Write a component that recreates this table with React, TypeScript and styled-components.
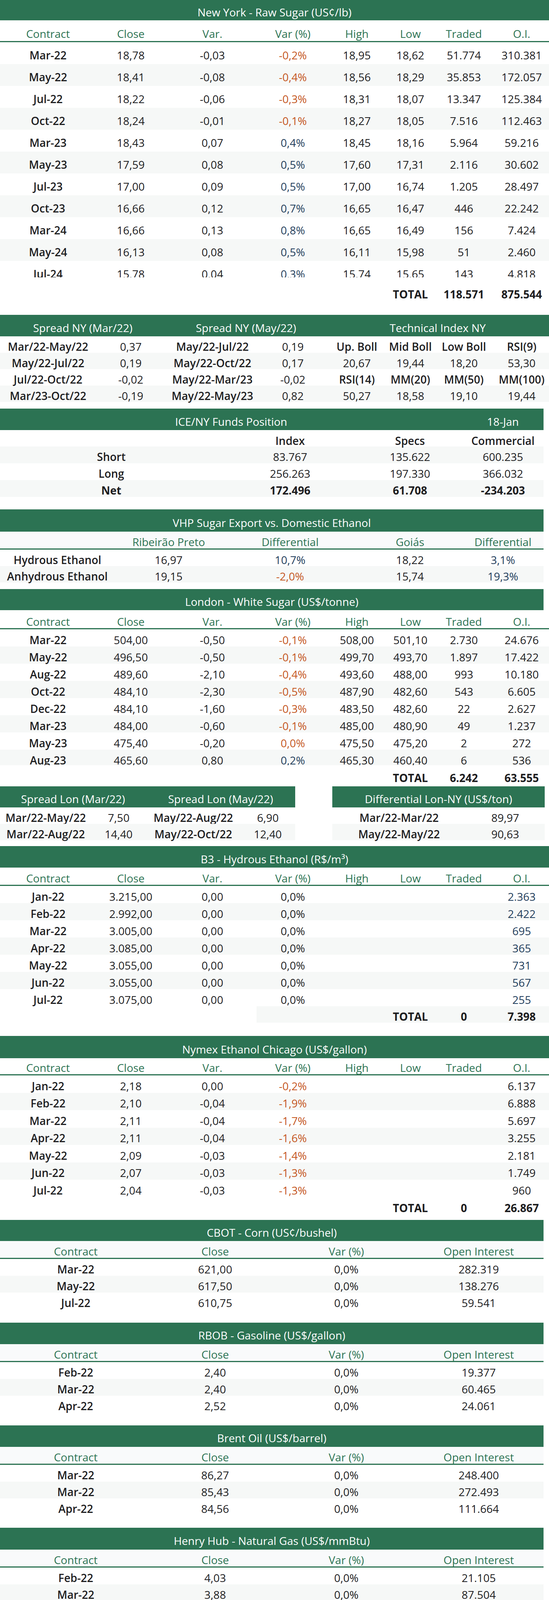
import React from 'react'
import styled, { createGlobalStyle } from 'styled-components'

const GREEN = '#2c7353'
const INK = '#1d1d1f'
const NEG = '#c4561e'
const POS = '#1f3d5b'
const STRIPE = '#f6f8f7'
const HEAD_BG = '#f9fafb'

const C8 = '246px 178px 240px 172px 156px 118px 156px 140px'
const C5 = '294px 276px 346px 268px 208px'
const C4 = '388px 326px 346px 332px'
const ICE = '570px 346px 268px 208px'
const ANP = '388px 340px 338px 340px'
const LEFT = '354px 174px 176px'
const RIGHT = '352px 170px 150px'
const USA = '522px 150px'
const LON_L = '234px 140px 242px 140px'
const LON_R = '342px 202px'

type Tone = 'plain' | 'neg' | 'pos'
type Parsed = { text: string; bold: boolean; label: boolean; tone: Tone }

// cell prefixes: * bold, # label weight, ~ negative (orange), ^ positive (navy)
const parse = (raw: string): Parsed => {
  const out: Parsed = { text: raw, bold: false, label: false, tone: 'plain' }
  let i = 0
  while (i < raw.length && '*#~^'.includes(raw[i])) {
    const ch = raw[i]
    if (ch === '*') out.bold = true
    else if (ch === '#') out.label = true
    else if (ch === '~') out.tone = 'neg'
    else out.tone = 'pos'
    i++
  }
  out.text = raw.slice(i)
  return out
}

const GlobalStyle = createGlobalStyle`
  *, *::before, *::after { box-sizing: border-box; }
  body {
    margin: 0;
    background: #fff;
    color: ${INK};
    font-family: 'Open Sans', 'Liberation Sans', Arial, sans-serif;
    font-size: 28px;
  }
`

const Page = styled.div`
  width: 1406px;
  display: flex;
  flex-direction: column;
`

const Section = styled.section<{ $w?: number; $gap?: number }>`
  width: ${p => p.$w ?? 1406}px;
  margin-bottom: ${p => p.$gap ?? 0}px;
`

const Banner = styled.div<{ $h: number; $cols?: string; $w?: number }>`
  display: grid;
  grid-template-columns: ${p => p.$cols ?? '1fr'};
  align-items: center;
  justify-items: center;
  width: ${p => (p.$w ? `${p.$w}px` : '100%')};
  height: ${p => p.$h}px;
  padding-top: 10px;
  background: ${GREEN};
  color: #fff;
  font-weight: 500;
  line-height: 30px;
  white-space: nowrap;
`

const Row = styled.div<{
  $cols: string
  $h: number
  $shade?: boolean
  $pt?: number
  $top?: boolean
  $mt?: number
  $shadeFrom?: number
  $clip?: boolean
}>`
  display: grid;
  grid-template-columns: ${p => p.$cols};
  height: ${p => p.$h}px;
  margin-top: ${p => p.$mt ?? 0}px;
  padding-top: ${p => p.$pt ?? 9}px;
  align-items: ${p => (p.$top ? 'start' : 'center')};
  background: ${p =>
    p.$shadeFrom !== undefined
      ? `linear-gradient(90deg, #fff ${p.$shadeFrom}px, ${STRIPE} ${p.$shadeFrom}px)`
      : p.$shade
        ? STRIPE
        : '#fff'};
  line-height: 30px;
  overflow: ${p => (p.$clip ? 'hidden' : 'visible')};
`

const Cell = styled.div<{ $tone: Tone; $bold?: boolean; $label?: boolean }>`
  display: flex;
  justify-content: center;
  white-space: nowrap;
  font-weight: ${p => (p.$bold ? 700 : p.$label ? 600 : 400)};
  color: ${p => (p.$tone === 'neg' ? NEG : p.$tone === 'pos' ? POS : INK)};
`

const HeadRow = styled.div<{ $cols: string; $h: number; $light?: boolean; $line?: boolean; $pb?: number }>`
  display: grid;
  grid-template-columns: ${p => p.$cols};
  height: ${p => p.$h}px;
  align-items: end;
  padding-bottom: ${p => p.$pb ?? 2}px;
  background: ${p => (p.$light ? HEAD_BG : '#fff')};
  border-bottom: ${p => (p.$line ? `3px solid ${GREEN}` : 'none')};
  line-height: 30px;
`

const HeadCell = styled.div<{ $ink?: boolean }>`
  display: flex;
  justify-content: center;
  white-space: nowrap;
  color: ${p => (p.$ink ? INK : GREEN)};
  font-weight: ${p => (p.$ink ? 600 : 400)};
`

const Clip = styled.div<{ $h: number }>`
  height: ${p => p.$h}px;
  overflow: hidden;
`

const Split = styled.div<{ $cols: string; $gap: number; $mb: number }>`
  display: grid;
  grid-template-columns: ${p => p.$cols};
  column-gap: ${p => p.$gap}px;
  align-items: start;
  margin-bottom: ${p => p.$mb}px;
`

const Panel = styled.div`
  display: flex;
  flex-direction: column;
`

const Spacer = styled.div<{ $h: number }>`
  height: ${p => p.$h}px;
`

type LineProps = {
  cells: string[]
  cols: string
  h: number
  shade?: boolean
  pt?: number
  top?: boolean
  mt?: number
  shadeFrom?: number
  plainFirst?: boolean
  clip?: boolean
}

const Line = ({ cells, cols, h, shade, pt, top, mt, shadeFrom, plainFirst, clip }: LineProps) => (
  <Row $cols={cols} $h={h} $shade={shade} $pt={pt} $top={top} $mt={mt} $shadeFrom={shadeFrom} $clip={clip}>
    {cells.map((raw, i) => {
      const c = parse(raw)
      return (
        <Cell key={i} $tone={c.tone} $bold={c.bold} $label={c.label || (i === 0 && !plainFirst)}>
          {c.text}
        </Cell>
      )
    })}
  </Row>
)

const Rows = ({ rows, cols, h, offset = 0, plainFirst }: {
  rows: string[][]
  cols: string
  h: number
  offset?: number
  plainFirst?: boolean
}) => (
  <>
    {rows.map((r, i) => (
      <Line key={i} cells={r} cols={cols} h={h} shade={(i + offset) % 2 === 1} plainFirst={plainFirst} />
    ))}
  </>
)

const Head = ({ cells, cols, h, light, line, ink, pb }: {
  cells: string[]
  cols: string
  h: number
  light?: boolean
  line?: boolean
  ink?: boolean
  pb?: number
}) => (
  <HeadRow $cols={cols} $h={h} $light={light} $line={line} $pb={pb}>
    {cells.map((t, i) => (
      <HeadCell key={i} $ink={ink}>{t}</HeadCell>
    ))}
  </HeadRow>
)

const HEAD8 = ['Contract', 'Close', 'Var.', 'Var (%)', 'High', 'Low', 'Traded', 'O.I.']
const HEAD4 = ['Contract', 'Close', 'Var (%)', 'Open Interest']

const nyRows = [
  ['Mar-22', '18,78', '-0,03', '~-0,2%', '18,95', '18,62', '51.774', '310.381'],
  ['May-22', '18,41', '-0,08', '~-0,4%', '18,56', '18,29', '35.853', '172.057'],
  ['Jul-22', '18,22', '-0,06', '~-0,3%', '18,31', '18,07', '13.347', '125.384'],
  ['Oct-22', '18,24', '-0,01', '~-0,1%', '18,27', '18,05', '7.516', '112.463'],
  ['Mar-23', '18,43', '0,07', '^0,4%', '18,45', '18,16', '5.964', '59.216'],
  ['May-23', '17,59', '0,08', '^0,5%', '17,60', '17,31', '2.116', '30.602'],
  ['Jul-23', '17,00', '0,09', '^0,5%', '17,00', '16,74', '1.205', '28.497'],
  ['Oct-23', '16,66', '0,12', '^0,7%', '16,65', '16,47', '446', '22.242'],
  ['Mar-24', '16,66', '0,13', '^0,8%', '16,65', '16,49', '156', '7.424'],
  ['May-24', '16,13', '0,08', '^0,5%', '16,11', '15,98', '51', '2.460'],
  ['Jul-24', '15,78', '0,04', '^0,3%', '15,74', '15,65', '143', '4.818'],
]

const spreadNy = [
  ['Mar/22-May/22', '0,37', '#May/22-Jul/22', '0,19', '#Up. Boll', '#Mid Boll', '#Low Boll', '#RSI(9)'],
  ['May/22-Jul/22', '0,19', '#May/22-Oct/22', '0,17', '20,67', '19,44', '18,20', '53,30'],
  ['Jul/22-Oct/22', '-0,02', '#May/22-Mar/23', '-0,02', '#RSI(14)', '#MM(20)', '#MM(50)', '#MM(100)'],
  ['Mar/23-Oct/22', '-0,19', '#May/22-May/23', '0,82', '50,27', '18,58', '19,10', '19,44'],
]

const iceRows = [
  ['Short', '83.767', '135.622', '600.235'],
  ['Long', '256.263', '197.330', '366.032'],
  ['*Net', '*172.496', '*61.708', '*-234.203'],
]

const vhpRows = [
  ['Hydrous Ethanol', '16,97', '^10,7%', '18,22', '^3,1%'],
  ['Anhydrous Ethanol', '19,15', '~-2,0%', '15,74', '^19,3%'],
]

const londonRows = [
  ['Mar-22', '504,00', '-0,50', '~-0,1%', '508,00', '501,10', '2.730', '24.676'],
  ['May-22', '496,50', '-0,50', '~-0,1%', '499,70', '493,70', '1.897', '17.422'],
  ['Aug-22', '489,60', '-2,10', '~-0,4%', '493,60', '488,00', '993', '10.180'],
  ['Oct-22', '484,10', '-2,30', '~-0,5%', '487,90', '482,60', '543', '6.605'],
  ['Dec-22', '484,10', '-1,60', '~-0,3%', '483,50', '482,60', '22', '2.627'],
  ['Mar-23', '484,00', '-0,60', '~-0,1%', '485,00', '480,90', '49', '1.237'],
  ['May-23', '475,40', '-0,20', '~0,0%', '475,50', '475,20', '2', '272'],
  ['Aug-23', '465,60', '0,80', '^0,2%', '465,30', '460,40', '6', '536'],
]

const spreadLon = [
  ['Mar/22-May/22', '7,50', '#May/22-Aug/22', '6,90'],
  ['Mar/22-Aug/22', '14,40', '#May/22-Oct/22', '12,40'],
]

const diffLon = [
  ['Mar/22-Mar/22', '89,97'],
  ['May/22-May/22', '90,63'],
]

const b3Rows = [
  ['Jan-22', '3.215,00', '0,00', '0,0%', '', '', '', '^2.363'],
  ['Feb-22', '2.992,00', '0,00', '0,0%', '', '', '', '^2.422'],
  ['Mar-22', '3.005,00', '0,00', '0,0%', '', '', '', '^695'],
  ['Apr-22', '3.085,00', '0,00', '0,0%', '', '', '', '^365'],
  ['May-22', '3.055,00', '0,00', '0,0%', '', '', '', '^731'],
  ['Jun-22', '3.055,00', '0,00', '0,0%', '', '', '', '^567'],
  ['Jul-22', '3.075,00', '0,00', '0,0%', '', '', '', '^255'],
]

const nymexRows = [
  ['Jan-22', '2,18', '0,00', '~-0,2%', '', '', '', '6.137'],
  ['Feb-22', '2,10', '-0,04', '~-1,9%', '', '', '', '6.888'],
  ['Mar-22', '2,11', '-0,04', '~-1,7%', '', '', '', '5.697'],
  ['Apr-22', '2,11', '-0,04', '~-1,6%', '', '', '', '3.255'],
  ['May-22', '2,09', '-0,03', '~-1,4%', '', '', '', '2.181'],
  ['Jun-22', '2,07', '-0,03', '~-1,3%', '', '', '', '1.749'],
  ['Jul-22', '2,04', '-0,03', '~-1,3%', '', '', '', '960'],
]

const quads = [
  {
    title: 'CBOT - Corn (US¢/bushel)',
    banner: 54,
    gap: 34,
    rows: [
      ['Mar-22', '621,00', '0,0%', '282.319'],
      ['May-22', '617,50', '0,0%', '138.276'],
      ['Jul-22', '610,75', '0,0%', '59.541'],
    ],
  },
  {
    title: 'RBOB - Gasoline (US$/gallon)',
    banner: 55,
    gap: 33,
    rows: [
      ['Feb-22', '2,40', '0,0%', '19.377'],
      ['Mar-22', '2,40', '0,0%', '60.465'],
      ['Apr-22', '2,52', '0,0%', '24.061'],
    ],
  },
  {
    title: 'Brent Oil (US$/barrel)',
    banner: 55,
    gap: 32,
    rows: [
      ['Mar-22', '86,27', '0,0%', '248.400'],
      ['Mar-22', '85,43', '0,0%', '272.493'],
      ['Apr-22', '84,56', '0,0%', '111.664'],
    ],
  },
  {
    title: 'Henry Hub - Natural Gas (US$/mmBtu)',
    banner: 56,
    gap: 15,
    rows: [
      ['Feb-22', '4,03', '0,0%', '21.105'],
      ['Mar-22', '3,88', '0,0%', '87.504'],
      ['Apr-22', '3,84', '0,0%', '42.401'],
    ],
  },
]

const sugarSp = [
  ['White (50 kg bag)', '148,34', '*~-2,2%'],
  ['Packed white (5 kg bag)', '16,99', '0,0%'],
  ['Refined amorf (1 kg bag)', '3,82', '*0,0%'],
]
const ethanolSp = [
  ['Hydrous Paulinia - Daily', '3,23', '*~-0,7%'],
  ['Hydrous SP - Weekly', '3,30', '~-1,4%'],
  ['Anhydrous SP - Weekly', '3,83', '*~0,0%'],
]
const ethanolCs = [
  ['Hydrous Goiás', '3,26', '*~-0,4%'],
  ['Anhydrous Goiás', '2,88', '~-2,2%'],
  ['Hydrous Mato Grosso', '4,060', '-1,4%'],
  ['Anhydrous Mato Grosso', '-', '-'],
]
const ethanolNe = [
  ['Hydrous Pernambuco', '3,03', '*^0,7%'],
  ['Anhydrous Pernambuco', '-', '-'],
]
const consecana = [
  ['ATR Price (R$/kg)', '1,37', '1,04'],
  ['Accumulated ATR (R$/kg)', '1,17', '0,97'],
  ['Cane/Field (R$/ton)', '127,65', '108,43'],
]

const exMill = [
  ['', '#Hydrous', '#Anhydrous'],
  ['Ribeirão Preto', '3,80', '3,95'],
  ['Paulínia', '3,85', '4,00'],
  ['Araçatuba', '3,78', '3,93'],
  ['Catanduva', '3,79', '3,94'],
]
const premium = [
  ['', '*25-Jan', '*20-Jan'],
  ['VHP vs NY H2 (US¢/lb)', '0,00', '-0,01'],
  ['150 vs NY H2 (US$/ton)', '0,00', '72,50'],
]
const domestic = [
  ['', '*21-Jan', ''],
  ['Goiás', '131,20', ''],
  ['Pernambuco', '137,65', ''],
  ['Alagoas', '134,16', ''],
]
const usaDiff = [
  ['CBOT Ethanol - B3 Ethanol', '~-0,06'],
  ['RBOB Gasoline - CBOT Ethanol', '0,22'],
  ['CBOT Ethanol - CBOT Corn', '~-0,08'],
  ['Weekly ethanol plant margin', '^18,6%'],
]

const anpRows = [
  ['São Paulo', '6,07', '6,34', '~95,8%'],
  ['Minas Gerais', '5,23', '6,94', '~75,4%'],
  ['Paraná', '5,02', '6,34', '~79,3%'],
  ['Goiás', '5,77', '6,92', '~83,3%'],
  ['Mato Grosso do Sul', '4,67', '6,49', '~71,9%'],
  ['Mato Grosso', '5,73', '6,53', '~87,8%'],
  ['Rio Grande do Sul', '5,68', '6,51', '~87,2%'],
  ['Pernambuco', '5,11', '6,59', '~77,6%'],
  ['Alagoas', '5,12', '6,52', '~78,4%'],
  ['Paraíba', '6,16', '6,49', '~95,0%'],
  ['Bahia', '5,32', '6,79', '~78,3%'],
]

const carbonRows = [
  ['*01/03/22', '168,70', '1.297.757', '0,36', '521,28'],
  ['*01/10/22', '169,64', '739.527', '0,37', '524,18'],
  ['*01/17/22', '172,03', '116.000', '0,37', '531,57'],
]

const App = () => {
  return (
    <Page>
      <GlobalStyle />

      <Section $gap={30}>
        <Banner $h={52}>New York - Raw Sugar (US¢/lb)</Banner>
        <Head cells={HEAD8} cols={C8} h={56} line pb={4} />
        <Clip $h={602}>
          <Rows rows={nyRows} cols={C8} h={56} />
        </Clip>
        <Line cells={['', '', '', '', '', '*TOTAL', '*118.571', '*875.544']} cols={C8} h={56} mt={10} />
      </Section>

      <Section $gap={17}>
        <Banner $h={55} $cols="424px 412px 570px">
          <span>Spread NY (Mar/22)</span>
          <span>Spread NY (May/22)</span>
          <span>Technical Index NY</span>
        </Banner>
        <Rows rows={spreadNy} cols={C8} h={42} />
      </Section>

      <Section $w={1392} $gap={32}>
        <Banner $h={55} $cols="1184px 208px">
          <span>ICE/NY Funds Position</span>
          <span>18-Jan</span>
        </Banner>
        <Head cells={['', 'Index', 'Specs', 'Commercial']} cols={ICE} h={42} ink pb={0} />
        <Rows rows={iceRows} cols={ICE} h={43} offset={1} />
      </Section>

      <Section $w={1392} $gap={17}>
        <Banner $h={57}>VHP Sugar Export vs. Domestic Ethanol</Banner>
        <Head cells={['', 'Ribeirão Preto', 'Differential', 'Goiás', 'Differential']} cols={C5} h={46} light line />
        <Rows rows={vhpRows} cols={C5} h={42} />
      </Section>

      <Section $gap={5}>
        <Banner $h={54} $w={1392}>London - White Sugar (US$/tonne)</Banner>
        <Head cells={HEAD8} cols={C8} h={49} line />
        <Clip $h={348}>
          <Rows rows={londonRows} cols={C8} h={44} />
        </Clip>
        <Line cells={['', '', '', '', '', '*TOTAL', '*6.242', '*63.555']} cols={C8} h={44} mt={5} />
      </Section>

      <Split $cols="756px 544px" $gap={95} $mb={15}>
        <Panel>
          <Banner $h={54} $cols="374px 382px">
            <span>Spread Lon (Mar/22)</span>
            <span>Spread Lon (May/22)</span>
          </Banner>
          <Rows rows={spreadLon} cols={LON_L} h={42} />
        </Panel>
        <Panel>
          <Banner $h={54}>Differential Lon-NY (US$/ton)</Banner>
          <Rows rows={diffLon} cols={LON_R} h={42} />
        </Panel>
      </Split>

      <Section $gap={34}>
        <Banner $h={55}>B3 - Hydrous Ethanol (R$/m³)</Banner>
        <Head cells={HEAD8} cols={C8} h={47} line />
        <Rows rows={b3Rows} cols={C8} h={44} />
        <Line cells={['', '', '', '', '', '*TOTAL', '*0', '*7.398']} cols={C8} h={42} shadeFrom={657} />
      </Section>

      <Section $gap={12}>
        <Banner $h={57}>Nymex Ethanol Chicago (US$/gallon)</Banner>
        <Head cells={HEAD8} cols={C8} h={44} line />
        <Rows rows={nymexRows} cols={C8} h={44.5} />
        <Line cells={['', '', '', '', '', '*TOTAL', '*0', '*26.867']} cols={C8} h={46} />
      </Section>

      {quads.map(q => (
        <Section key={q.title} $w={1392} $gap={q.gap}>
          <Banner $h={q.banner}>{q.title}</Banner>
          <Head cells={HEAD4} cols={C4} h={46} light line />
          <Rows rows={q.rows} cols={C4} h={43} />
        </Section>
      ))}

      <Split $cols="704px 672px" $gap={16} $mb={11}>
        <Panel>
          <Banner $h={54}>CEPEA/ESALQ Indicators</Banner>
          <Head cells={['Sugar - São Paulo', 'R$', 'Variation']} cols={LEFT} h={47} light line />
          <Rows rows={sugarSp} cols={LEFT} h={43.5} />
          <Head cells={['Ethanol São Paulo', 'R$/L', 'Variation']} cols={LEFT} h={47} light line />
          <Rows rows={ethanolSp} cols={LEFT} h={43.5} />
          <Head cells={['Ethanol - Center-South', 'R$/L', 'Variation']} cols={LEFT} h={47} light line />
          <Rows rows={ethanolCs} cols={LEFT} h={43.5} />
          <Head cells={['Ethanol - Northeast', 'R$/L', 'Variation']} cols={LEFT} h={47} light line />
          <Rows rows={ethanolNe} cols={LEFT} h={43.5} />
          <Line cells={['Hydrous Alagoas', '3,13', '*^0,7%']} cols={LEFT} h={35} pt={6} top clip />
          <Line cells={['Anhydrous Alagoas', '3,83', '^1,0%']} cols={LEFT} h={55} pt={14} shade />
          <Banner $h={43}>CONSECANA Indicators</Banner>
          <Head cells={['', 'SP (Nov/21)', 'PR (Nov/21)']} cols={LEFT} h={47} light line />
          <Rows rows={consecana} cols={LEFT} h={43.5} />
        </Panel>
        <Panel>
          <Banner $h={54}>StoneX Indicators</Banner>
          <Head cells={['Ex-mill Ethanol Prices: São Paulo (R$/L)']} cols="1fr" h={47} light line />
          <Rows rows={exMill} cols={RIGHT} h={43.5} />
          <Head cells={['Sugar Premium: FOB Santos-SP']} cols="1fr" h={47} light line />
          <Rows rows={premium} cols={RIGHT} h={43.5} />
          <Spacer $h={43.5} />
          <Head cells={['Domestic Sugar Prices (R$/50kg bag)']} cols="1fr" h={47} line />
          <Rows rows={domestic} cols={RIGHT} h={43.5} />
          <Spacer $h={35} />
          <Banner $h={56}>USA Ethanol Differentials (US$/gallon)</Banner>
          <Rows rows={usaDiff} cols={USA} h={43.5} />
        </Panel>
      </Split>

      <Section $gap={8}>
        <Banner $h={56}>ANP - Rack Prices (R$/L)</Banner>
        <Head cells={['', 'Ethanol', 'Gasoline', 'Ethanol/Gasoline']} cols={ANP} h={47} light line />
        <Rows rows={anpRows} cols={ANP} h={45} />
      </Section>

      <Section $w={1392} $gap={30}>
        <Banner $h={53}>Carbon Intensity - LCFS California</Banner>
        <Head
          cells={['Date', 'Av. Value (US$)', 'Vol. (ton of CO2eq.)', 'Value (US$/gallon)', 'BRL/m³ eq.']}
          cols={C5}
          h={45}
          light
          line
        />
        <Rows rows={carbonRows} cols={C5} h={41.5} />
      </Section>

      <Section $w={1392}>
        <Banner $h={55}>RenovaBio - CBIO sales (2022)</Banner>
        <Head
          cells={['Traded', 'Volume of CBIOs', 'Weighted avg price', 'Minimum', 'Maximum']}
          cols={C5}
          h={57}
          light
          line
        />
        <Rows rows={[['1.611', '2.501.604', 'R$ 61,92', 'R$ 34,00', 'R$ 71,00']]} cols={C5} h={43} plainFirst />
      </Section>
    </Page>
  )
}

export default App
